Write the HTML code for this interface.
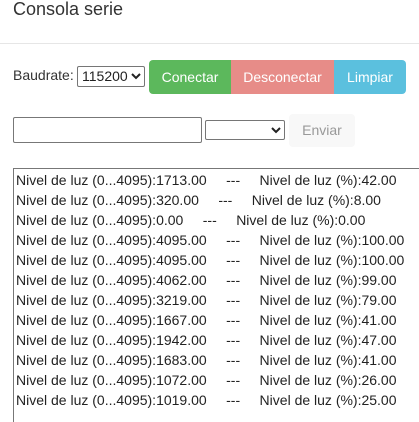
<!DOCTYPE html>
<html style="overflow:hidden;height:422px"><head><meta charset="utf-8"><style>
html,body{margin:0;height:422px;overflow:hidden}
body{width:419px;background:#fff;font-family:"Liberation Sans",sans-serif;color:#333}
#w{position:relative;width:419px;height:422px;overflow:hidden}
.a{position:absolute}
h1{position:absolute;left:13px;top:-3px;margin:0;font-weight:normal;font-size:18px;line-height:24px}
.hr{position:absolute;left:0;top:43px;width:419px;height:1px;background:#e6e6e6}
.btn{position:absolute;top:60px;height:34px;color:#fff;font-size:14px;line-height:34px;text-align:center}
.sel{position:absolute;border:1px solid #767676;border-radius:2px;background:#fff;box-sizing:border-box}
.chev{position:absolute;right:3px;top:4px}
pre{position:absolute;left:13px;top:168px;width:420px;height:270px;margin:0;border:1px solid #777;box-sizing:border-box;padding:1px 0 0 2px;font-family:"Liberation Sans",sans-serif;font-size:14px;line-height:20px;color:#222}
</style></head><body><div id="w">
<h1>Consola serie</h1>
<div class="hr"></div>
<div class="a" style="left:13px;top:67px;font-size:14px">Baudrate:</div>
<div class="sel" style="left:77px;top:66px;width:68px;height:21px;font-size:14px;line-height:19px;padding-left:4px;color:#222">115200<svg class="chev" width="10" height="10" viewBox="0 0 10 10"><path d="M1 3l4 4 4-4" stroke="#222" stroke-width="2" fill="none"/></svg></div>
<div class="btn" style="left:149px;width:82px;background:#5cb85c;border-radius:4px 0 0 4px">Conectar</div>
<div class="btn" style="left:231px;width:103px;background:#e78c88">Desconectar</div>
<div class="btn" style="left:334px;width:72px;background:#5bc0de;border-radius:0 4px 4px 0">Limpiar</div>
<div class="sel" style="left:13px;top:117px;width:189px;height:26px;border-color:#777"></div>
<div class="sel" style="left:205px;top:120px;width:80px;height:20px"><svg class="chev" style="top:4px" width="10" height="10" viewBox="0 0 10 10"><path d="M1 3l4 4 4-4" stroke="#222" stroke-width="2" fill="none"/></svg></div>
<div class="a" style="left:289px;top:114px;width:66px;height:33px;background:#f8f8f8;border-radius:4px;color:#999;font-size:14px;line-height:33px;text-align:center">Enviar</div>
<pre>Nivel de luz (0...4095):1713.00     ---     Nivel de luz (%):42.00
Nivel de luz (0...4095):320.00     ---     Nivel de luz (%):8.00
Nivel de luz (0...4095):0.00     ---     Nivel de luz (%):0.00
Nivel de luz (0...4095):4095.00     ---     Nivel de luz (%):100.00
Nivel de luz (0...4095):4095.00     ---     Nivel de luz (%):100.00
Nivel de luz (0...4095):4062.00     ---     Nivel de luz (%):99.00
Nivel de luz (0...4095):3219.00     ---     Nivel de luz (%):79.00
Nivel de luz (0...4095):1667.00     ---     Nivel de luz (%):41.00
Nivel de luz (0...4095):1942.00     ---     Nivel de luz (%):47.00
Nivel de luz (0...4095):1683.00     ---     Nivel de luz (%):41.00
Nivel de luz (0...4095):1072.00     ---     Nivel de luz (%):26.00
Nivel de luz (0...4095):1019.00     ---     Nivel de luz (%):25.00</pre>
</div></body></html>
